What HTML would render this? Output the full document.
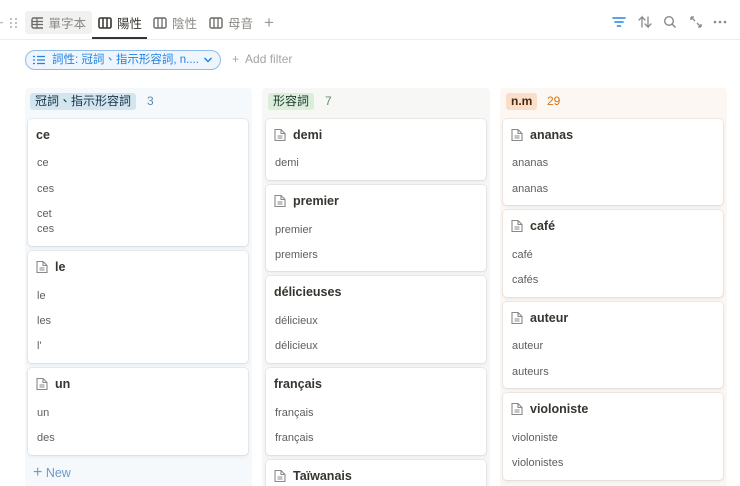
<!DOCTYPE html>
<html><head><meta charset="utf-8"><style>
*{margin:0;padding:0;box-sizing:border-box}
html,body{width:740px;height:486px;overflow:hidden}
body{background:#fff;font-family:"Liberation Sans","Noto Sans CJK TC",sans-serif;color:#37352f;position:relative}
.a{position:absolute;white-space:nowrap}
.tab{position:absolute;top:11px;height:23px;font-size:12.5px;color:#8a8985;display:flex;align-items:center;gap:5px;padding:0 6px;white-space:nowrap}
.col{position:absolute;top:88px;height:400px;border-radius:4px}
.card{position:absolute;background:#fff;border-radius:4px;box-shadow:0 0 0 1px rgba(15,15,15,.06),0 2px 4px rgba(15,15,15,.06);width:220px}
.t{position:absolute;left:8px;top:9px;font-size:12.5px;font-weight:bold;color:#37352f;display:flex;align-items:center;gap:7px;white-space:nowrap}
.i{position:absolute;left:9px;font-size:11px;color:#5f5e5a;white-space:nowrap}
.tag{position:absolute;top:5px;height:17px;line-height:17px;padding:0 5px;border-radius:3px;font-size:12px;white-space:nowrap}
.cnt{position:absolute;top:5px;line-height:17px;font-size:12px}
</style></head><body>
<svg class="a" style="left:0;top:14px" width="20" height="18"><g fill="#bbb"><rect x="0" y="8" width="3" height="1.3"/><circle cx="11" cy="5" r="1.1"/><circle cx="16" cy="5" r="1.1"/><circle cx="11" cy="9" r="1.1"/><circle cx="16" cy="9" r="1.1"/><circle cx="11" cy="13" r="1.1"/><circle cx="16" cy="13" r="1.1"/></g></svg>
<div class="tab" style="left:25px;width:67px;background:#f1f1ef;border-radius:3px"><svg width="14" height="12"><rect x="1" y="1" width="12" height="10" rx="1.5" fill="none" stroke="#6b6a66" stroke-width="1.4"/><path d="M1 4.5H13M1 7.5H13M6 1V11" stroke="#6b6a66" stroke-width="1.2"/></svg>單字本</div>
<div class="tab" style="left:92px;color:#37352f"><svg width="14" height="12"><rect x="1" y="1" width="12" height="10" rx="1.5" fill="none" stroke="#37352f" stroke-width="1.6"/><path d="M5 1V11M9 1V11" stroke="#37352f" stroke-width="1.5"/></svg>陽性</div>
<div class="a" style="left:92px;top:37px;width:55px;height:2px;background:#37352f"></div>
<div class="tab" style="left:147px"><svg width="14" height="12"><rect x="1" y="1" width="12" height="10" rx="1.5" fill="none" stroke="#6b6a66" stroke-width="1.4"/><path d="M5 1V11M9 1V11" stroke="#6b6a66" stroke-width="1.3"/></svg>陰性</div>
<div class="tab" style="left:203px"><svg width="14" height="12"><rect x="1" y="1" width="12" height="10" rx="1.5" fill="none" stroke="#6b6a66" stroke-width="1.4"/><path d="M5 1V11M9 1V11" stroke="#6b6a66" stroke-width="1.3"/></svg>母音</div>
<div class="tab" style="left:258px;font-size:17px;color:#999">+</div>
<div class="a" style="left:0;top:39px;width:740px;height:1px;background:#ededec"></div>
<svg class="a" style="left:610px;top:14px" width="125" height="16">
<path d="M3 4H15M5 8H13M7.5 12H10.5" stroke="#2383e2" stroke-width="1.6" stroke-linecap="round"/>
<path d="M32 13V3L29 6M32 3L35 6M38 3V13L35 10M38 13L41 10" stroke="#8a8986" stroke-width="1.3" fill="none" stroke-linecap="round"/>
<circle cx="59" cy="7" r="4.3" fill="none" stroke="#8a8986" stroke-width="1.4"/><path d="M62 10L65.5 13.5" stroke="#8a8986" stroke-width="1.5"/>
<path d="M81 3L85 7M81 3V6M81 3H84M91 13L87 9M91 13V10M91 13H88" stroke="#8a8986" stroke-width="1.3" fill="none"/>
<g fill="#8a8986"><circle cx="105" cy="8" r="1.3"/><circle cx="110" cy="8" r="1.3"/><circle cx="115" cy="8" r="1.3"/></g></svg>
<div class="a" style="left:25px;top:50px;width:196px;height:20px;border:1px solid #8fbbe8;background:#eef5fc;border-radius:11px;font-size:11.5px;color:#2383e2;line-height:18px;padding-left:26px">詞性: 冠詞、指示形容詞, n....</div>
<svg class="a" style="left:33px;top:55px" width="12" height="10"><g stroke="#2383e2" stroke-width="1.3"><path d="M0 1.5H2M4 1.5H12M0 5H2M4 5H12M0 8.5H2M4 8.5H12"/></g></svg>
<svg class="a" style="left:203px;top:56px" width="10" height="8"><path d="M1.5 2L5 5.5L8.5 2" stroke="#2383e2" stroke-width="1.5" fill="none"/></svg>
<div class="a" style="left:232px;top:52px;font-size:12px;color:#a5a4a0">+&nbsp; Add filter</div>

<div class="col" style="left:25px;width:227px;background:#f5f9fc"></div>
<div class="col" style="left:262px;width:228px;background:#f7f8f6"></div>
<div class="col" style="left:500px;width:227px;background:#fdf7f3"></div>
<div class="tag" style="left:30px;top:93px;background:#d3e5ef;color:#183347">冠詞、指示形容詞</div><div class="cnt" style="left:147px;top:93px;color:#5b8db5">3</div>
<div class="tag" style="left:268px;top:93px;background:#dbeddb;color:#1c3829">形容詞</div><div class="cnt" style="left:325px;top:93px;color:#6a8a6a">7</div>
<div class="tag" style="left:506px;top:93px;background:#fadec9;color:#49290e;font-weight:bold">n.m</div><div class="cnt" style="left:547px;top:93px;color:#d9730d">29</div>

<div class="card" style="left:28px;top:119px;height:127px"><div class="t">ce</div><div class="i" style="top:38px">ce</div><div class="i" style="top:64px">ces</div><div class="i" style="top:89px">cet</div><div class="i" style="top:104px">ces</div></div>
<div class="card" style="left:28px;top:251px;height:112px"><div class="t"><svg width="12" height="14"><path d="M1 1.5H7L11 5.5V12.5H1Z M7 1.5V5.5H11 M3.5 8H8.5M3.5 10H8.5" fill="none" stroke="#8a8986" stroke-width="1.1"/></svg>le</div><div class="i" style="top:39px">le</div><div class="i" style="top:64px">les</div><div class="i" style="top:89px">l'</div></div>
<div class="card" style="left:28px;top:368px;height:87px"><div class="t"><svg width="12" height="14"><path d="M1 1.5H7L11 5.5V12.5H1Z M7 1.5V5.5H11 M3.5 8H8.5M3.5 10H8.5" fill="none" stroke="#8a8986" stroke-width="1.1"/></svg>un</div><div class="i" style="top:39px">un</div><div class="i" style="top:64px">des</div></div>
<div class="a" style="left:33px;top:464px;font-size:12.5px;color:#6d9bc7"><span style="font-size:16px">+</span> New</div>

<div class="card" style="left:266px;top:119px;height:61px"><div class="t"><svg width="12" height="14"><path d="M1 1.5H7L11 5.5V12.5H1Z M7 1.5V5.5H11 M3.5 8H8.5M3.5 10H8.5" fill="none" stroke="#8a8986" stroke-width="1.1"/></svg>demi</div><div class="i" style="top:38px">demi</div></div>
<div class="card" style="left:266px;top:185px;height:86px"><div class="t"><svg width="12" height="14"><path d="M1 1.5H7L11 5.5V12.5H1Z M7 1.5V5.5H11 M3.5 8H8.5M3.5 10H8.5" fill="none" stroke="#8a8986" stroke-width="1.1"/></svg>premier</div><div class="i" style="top:39px">premier</div><div class="i" style="top:64px">premiers</div></div>
<div class="card" style="left:266px;top:276px;height:87px"><div class="t">délicieuses</div><div class="i" style="top:39px">délicieux</div><div class="i" style="top:64px">délicieux</div></div>
<div class="card" style="left:266px;top:368px;height:87px"><div class="t">français</div><div class="i" style="top:39px">français</div><div class="i" style="top:64px">français</div></div>
<div class="card" style="left:266px;top:460px;height:40px"><div class="t"><svg width="12" height="14"><path d="M1 1.5H7L11 5.5V12.5H1Z M7 1.5V5.5H11 M3.5 8H8.5M3.5 10H8.5" fill="none" stroke="#8a8986" stroke-width="1.1"/></svg>Taïwanais</div></div>

<div class="card" style="left:503px;top:119px;height:86px"><div class="t"><svg width="12" height="14"><path d="M1 1.5H7L11 5.5V12.5H1Z M7 1.5V5.5H11 M3.5 8H8.5M3.5 10H8.5" fill="none" stroke="#8a8986" stroke-width="1.1"/></svg>ananas</div><div class="i" style="top:38px">ananas</div><div class="i" style="top:64px">ananas</div></div>
<div class="card" style="left:503px;top:210px;height:87px"><div class="t"><svg width="12" height="14"><path d="M1 1.5H7L11 5.5V12.5H1Z M7 1.5V5.5H11 M3.5 8H8.5M3.5 10H8.5" fill="none" stroke="#8a8986" stroke-width="1.1"/></svg>café</div><div class="i" style="top:39px">café</div><div class="i" style="top:64px">cafés</div></div>
<div class="card" style="left:503px;top:302px;height:86px"><div class="t"><svg width="12" height="14"><path d="M1 1.5H7L11 5.5V12.5H1Z M7 1.5V5.5H11 M3.5 8H8.5M3.5 10H8.5" fill="none" stroke="#8a8986" stroke-width="1.1"/></svg>auteur</div><div class="i" style="top:38px">auteur</div><div class="i" style="top:64px">auteurs</div></div>
<div class="card" style="left:503px;top:393px;height:87px"><div class="t"><svg width="12" height="14"><path d="M1 1.5H7L11 5.5V12.5H1Z M7 1.5V5.5H11 M3.5 8H8.5M3.5 10H8.5" fill="none" stroke="#8a8986" stroke-width="1.1"/></svg>violoniste</div><div class="i" style="top:39px">violoniste</div><div class="i" style="top:64px">violonistes</div></div>
</body></html>
